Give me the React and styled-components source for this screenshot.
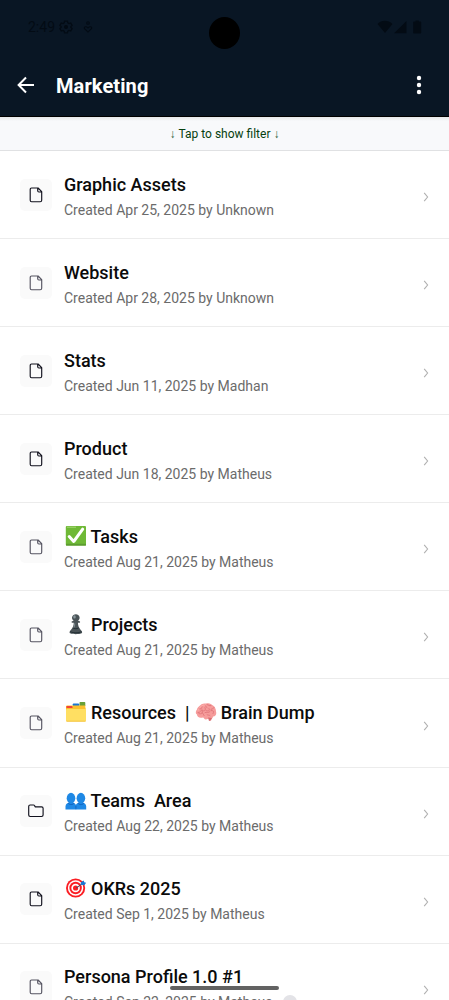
import React from 'react'
import styled, { createGlobalStyle } from 'styled-components'

const items = [
  { title: ['Graphic Assets'], date: 'Apr 25, 2025', by: 'Unknown', color: '#11111d' },
  { title: ['Website'], date: 'Apr 28, 2025', by: 'Unknown', color: '#555461' },
  { title: ['Stats'], date: 'Jun 11, 2025', by: 'Madhan', color: '#11111d' },
  { title: ['Product'], date: 'Jun 18, 2025', by: 'Matheus', color: '#11111d' },
  { title: [{ emoji: 'check' }, ' Tasks'], date: 'Aug 21, 2025', by: 'Matheus', color: '#555461' },
  { title: [{ emoji: 'pawn' }, ' Projects'], date: 'Aug 21, 2025', by: 'Matheus', color: '#555461' },
  {
    title: [{ emoji: 'dividers' }, ' Resources  | ', { emoji: 'brain' }, ' Brain Dump'],
    date: 'Aug 21, 2025',
    by: 'Matheus',
    color: '#555461'
  },
  { title: [{ emoji: 'people' }, ' Teams  Area'], date: 'Aug 22, 2025', by: 'Matheus', color: '#11111d', folder: true },
  { title: [{ emoji: 'target' }, ' OKRs 2025'], date: 'Sep 1, 2025', by: 'Matheus', color: '#11111d' },
  { title: ['Persona Profile 1.0 #1'], date: 'Sep 22, 2025', by: 'Matheus', color: '#555461' }
]

const emojis = {
  check: (
    <>
      <rect x="0.8" y="1" width="20.2" height="19.6" rx="1" fill="#6fb936" />
      <path d="M1 18.8h20v1.8H1z" fill="#5d9b31" />
      <path d="M2 2.2h9" stroke="#a6d976" strokeWidth="1" />
      <path d="M4.2 11.5l4.5 5L17.7 4.2" fill="none" stroke="#fff" strokeWidth="3" strokeLinecap="round" strokeLinejoin="round" />
    </>
  ),
  pawn: (
    <g transform="translate(-.7 -.3) scale(1.05)">
      <path d="M5 19.2c0-3 4-4 4-9.7H7.5c-.8 0-.8-1.3 0-1.4l1.4-.5C6 5.5 7.5 1.5 11 1.5s5 4 2.1 6.1l1.4.5c.8.1.8 1.4 0 1.4H13c0 5.7 4 6.7 4 9.7 0 1.7-12 1.7-12 0z" fill="#4a5357" />
      <path d="M8.5 14.5c1.4.8 3.6.8 5 0M5.5 18c2.7 1.5 8.3 1.5 11 0" fill="none" stroke="#263238" strokeWidth="1" />
      <ellipse cx="9.7" cy="4" rx="1.2" ry="1.5" fill="#87959b" />
      <path d="M10 10c0 2-.4 3-1 4" fill="none" stroke="#7c898e" strokeWidth="1" />
    </g>
  ),
  dividers: (
    <>
      <path d="M14.5 3V1.8c0-.5.3-.8.8-.8h4.2c.5 0 .8.3.8.8V5h-5.8z" fill="#689f38" />
      <path d="M7.8 5V3.2c0-.5.3-.8.8-.8h4.7c.5 0 .8.3.8.8V5z" fill="#1976d2" />
      <path d="M1 20V6c0-.6.4-1 1-1h5l1 1.8h12.5V20z" fill="#f9b927" />
      <path d="M1.5 4.5h18.8V8H1.5z" fill="#fbc02d" />
      <path d="M1.5 5h5.6l.6 2H1.5z" fill="#f44336" />
      <rect x="1" y="8" width="20" height="12.6" rx="1" fill="#ffdf62" />
      <path d="M1.5 20.2h19" stroke="#f5c644" />
    </>
  ),
  brain: (
    <g transform="translate(0 .6)">
      <path d="M2 8c0-2 2-3 3-4 2-2 4-2 6-2 3-1 5 0 7 2 2 1 3 4 3 6 1 3-1 5-3 5 0 2-2 3-4 2l-3 1c-2 0-2-2-3-2-4 1-6-1-6-3-2-1-1-4 0-5z" fill="#f69c9b" />
      <path d="M4 12c3 1 4-1 3-3 3 1 4-1 3-3M4 7c2 1 3 0 3-2m3-2c1 1 0 2 2 3m0-3c2 0 2 2 4 1m-5 5c3 1 4 0 3-2m5-1c-1 2-4 1-3 3 3 0 3 1 2 3m-8-1c2-1 3 1 5-1m-6 4c-1-1 0-2-2-3m5 2c1 1 2 0 3 1m-8-6c-2 1-1 3-4 3" fill="none" stroke="#df7579" strokeWidth=".9" strokeLinecap="round" />
      <path d="M3.2 9c.5-3 4-6 8-5.8" fill="none" stroke="#ffb4b0" strokeWidth=".8" />
      <path d="M13 16l4 .5-1 2.5-2 .5z" fill="#d96e73" />
    </g>
  ),
  people: (
    <g transform="translate(0 1.8)">
      <path d="M10.6 18.6v-2.8c0-3 2.2-4.2 5.2-4.2s5.4 1.3 5.4 4.2v2.8z" fill="#1e88e5" />
      <ellipse cx="15.9" cy="7.4" rx="4.3" ry="5.4" fill="#1e88e5" />
      <path d="M.5 18.6v-2.8c0-3 2.3-4.2 5.4-4.2s5.3 1.3 5.3 4.2v2.8z" fill="#1e88e5" />
      <ellipse cx="6" cy="7.4" rx="4.3" ry="5.4" fill="#1e88e5" />
      <path d="M3 12.2c1 2 5 2 6.4 0M12.8 12.2c1 2 5 2 6.4 0M10.9 18v-3" fill="none" stroke="#1565c0" strokeWidth="1" />
    </g>
  ),
  target: (
    <>
      <circle cx="10.6" cy="11" r="9.6" fill="#fb1d23" />
      <circle cx="10.6" cy="11" r="7.7" fill="#fff" />
      <circle cx="10.6" cy="11" r="6.2" fill="#fb1d23" />
      <circle cx="10.6" cy="11" r="4.3" fill="#fff" />
      <circle cx="10.6" cy="11" r="2.6" fill="#fb1d23" />
      <path d="M11 11.2l6.2-4.5" stroke="#35566d" strokeWidth="1" />
      <path d="M15.7 7.8l.2-2.5 3-1.8 .3 1.8 2 .4-1.9 2.5z" fill="#1976d2" />
    </>
  )
}

function Title({ parts }) {
  return (
    <TitleText>
      {parts.map((part, index) =>
        part.emoji ? (
          <Emoji key={index} viewBox="0 0 22 22">{emojis[part.emoji]}</Emoji>
        ) : (
          part
        )
      )}
    </TitleText>
  )
}

function ItemIcon({ folder, color }) {
  return (
    <IconBox>
      <svg width="16" height="16" viewBox="0 0 16 16" fill="none" stroke={color} strokeWidth="1.15" strokeLinejoin="round">
        {folder ? (
          <path d="M2.1 2h3.4c.5 0 .8.2 1 .6l.8 1.3h6.3c.9 0 1.5.6 1.5 1.4v6.8c0 .8-.6 1.4-1.5 1.4H2.1c-.9 0-1.4-.6-1.4-1.4V3.4C.7 2.6 1.2 2 2.1 2z" />
        ) : (
          <path d="M3.6 1h6.5l3.6 3.6v8.6c0 .9-.6 1.5-1.5 1.5H3.6c-.9 0-1.4-.6-1.4-1.5V2.5c0-.9.5-1.5 1.4-1.5zM9.7 1.1v2.7c0 .8.4 1.2 1.2 1.2h2.7" />
        )}
      </svg>
    </IconBox>
  )
}

function App() {
  return (
    <Screen>
      <GlobalStyle />
      <Header>
        <StatusBar>
          <StatusGroup>
            <Clock>2:49</Clock>
            <svg width="14" height="14" viewBox="0 0 24 24" fill="none" stroke="currentColor" strokeWidth="2.2">
              <path d="M9.5 2h5l.6 3 2.1 1.2 2.9-1 2.4 4.2-2.2 2v1.2l2.2 2-2.4 4.2-2.9-1-2.1 1.2-.6 3h-5l-.6-3-2.1-1.2-2.9 1-2.4-4.2 2.2-2v-1.2l-2.2-2 2.4-4.2 2.9 1L8.9 5z" />
              <circle cx="12" cy="12" r="2.4" fill="currentColor" />
            </svg>
            <CareIcon width="10" height="12" viewBox="0 0 10 12" fill="none" stroke="currentColor" strokeWidth="1.1">
              <circle cx="5" cy="2" r="1.3" />
              <path d="M5 11L1.5 7.7c-.9-1.8 1.6-3 3.5-.7 1.9-2.3 4.4-1.1 3.5.7z" />
            </CareIcon>
          </StatusGroup>
          <svg width="45" height="14" viewBox="0 0 45 14" fill="currentColor">
            <path d="M.5 4c4.2-4.4 10.6-4.4 15 0L8 13zM17 13.3L29.5 1v12.3zM43.2 1.6h-1.4V.4h-3.2v1.2h-1.4c-.6 0-1 .4-1 1v9.8c0 .6.4 1 1 1h6c.6 0 1-.4 1-1V2.6c0-.6-.4-1-1-1z" />
          </svg>
        </StatusBar>
        <Camera />
        <Toolbar>
          <svg width="18" height="18" viewBox="0 0 18 18" fill="none" stroke="#fff" strokeWidth="2">
            <path d="M17 9H2M9 1.5L1.6 9 9 16.5" />
          </svg>
          <Heading>Marketing</Heading>
          <svg width="6" height="20" viewBox="0 0 6 20" fill="#fff">
            <circle cx="3" cy="3" r="2.2" />
            <circle cx="3" cy="10" r="2.2" />
            <circle cx="3" cy="17" r="2.2" />
          </svg>
        </Toolbar>
      </Header>
      <Filter>
        <Arrow>↓</Arrow> Tap to show filter <Arrow>↓</Arrow>
      </Filter>
      {items.map((item, index) => (
        <Row key={index}>
          <ItemIcon folder={item.folder} color={item.color} />
          <Details>
            <Title parts={item.title} />
            <Meta>Created {item.date} by {item.by}</Meta>
          </Details>
          <Chevron width="6" height="10" viewBox="0 0 6 10" fill="none" stroke="#b0b0b0" strokeWidth="1.1">
            <path d="M1.2 .8L4.6 5 1.2 9.2" />
          </Chevron>
        </Row>
      ))}
      <ScrollHint />
      <HomeBar />
    </Screen>
  )
}

const GlobalStyle = createGlobalStyle`
  body {
    margin: 0;
    background: #fff;
  }
  * {
    box-sizing: border-box;
  }
`

const Screen = styled.div`
  position: relative;
  width: 449px;
  height: 1000px;
  overflow: hidden;
  background: #fff;
  font-family: Roboto, sans-serif;
`

const Header = styled.header`
  height: 117px;
  background: #091624;
  border-bottom: 1px solid #000;
`

const StatusBar = styled.div`
  display: flex;
  align-items: center;
  justify-content: space-between;
  height: 54px;
  padding: 0 27px 0 28px;
  color: #030b14;
`

const StatusGroup = styled.div`
  display: flex;
  align-items: center;
`

const Clock = styled.span`
  width: 31px;
  font-size: 14px;
  line-height: 16px;
`

const CareIcon = styled.svg`
  margin-left: 10px;
`

const Camera = styled.div`
  position: absolute;
  top: 17px;
  left: 209px;
  width: 31px;
  height: 32px;
  border-radius: 50%;
  background: #000;
`

const Toolbar = styled.div`
  display: flex;
  align-items: center;
  height: 62px;
  padding: 0 27px 0 17px;
`

const Heading = styled.h1`
  flex: 1;
  margin: 1px 0 0 21px;
  color: #fff;
  font-size: 20px;
  font-weight: 700;
  letter-spacing: 0.1px;
  line-height: 24px;
`

const Filter = styled.div`
  display: flex;
  align-items: center;
  justify-content: center;
  gap: 3px;
  height: 34px;
  background: linear-gradient(#e6e8ea, #f8f9fb 4px);
  border-bottom: 1px solid #e0e1e3;
  color: #06400f;
  font-size: 12px;
`

const Arrow = styled.span`
  font-family: 'Liberation Serif', serif;
  font-size: 12px;
  line-height: 14px;
  color: #2f5c36;
`

const Row = styled.div`
  display: flex;
  align-items: center;
  height: 88.09px;
  padding: 0 20px;
  border-bottom: 1px solid #ececec;
`

const IconBox = styled.div`
  display: flex;
  align-items: center;
  justify-content: center;
  width: 32px;
  height: 32px;
  border-radius: 5px;
  background: #fafafa;
`

const Details = styled.div`
  flex: 1;
  margin-left: 12px;
  padding-top: 3px;
`

const TitleText = styled.div`
  height: 24px;
  color: #0b0b0b;
  font-size: 18px;
  font-weight: 500;
  line-height: 24px;
  white-space: pre;
`

const Emoji = styled.svg`
  width: 22px;
  height: 22px;
  margin: 0 -0.2px 0 0.7px;
  vertical-align: -4px;
`

const Meta = styled.div`
  margin-top: 3px;
  color: #6b6b6b;
  font-size: 14px;
  line-height: 20px;
`

const Chevron = styled.svg`
  margin-top: 5px;
`

const ScrollHint = styled.div`
  position: absolute;
  top: 995px;
  left: 283px;
  width: 14px;
  height: 14px;
  border-radius: 50%;
  background: #e3e3e7;
`

const HomeBar = styled.div`
  position: absolute;
  top: 986px;
  left: 170px;
  width: 109px;
  height: 4px;
  border-radius: 2px;
  background: #626262;
`

export default App
